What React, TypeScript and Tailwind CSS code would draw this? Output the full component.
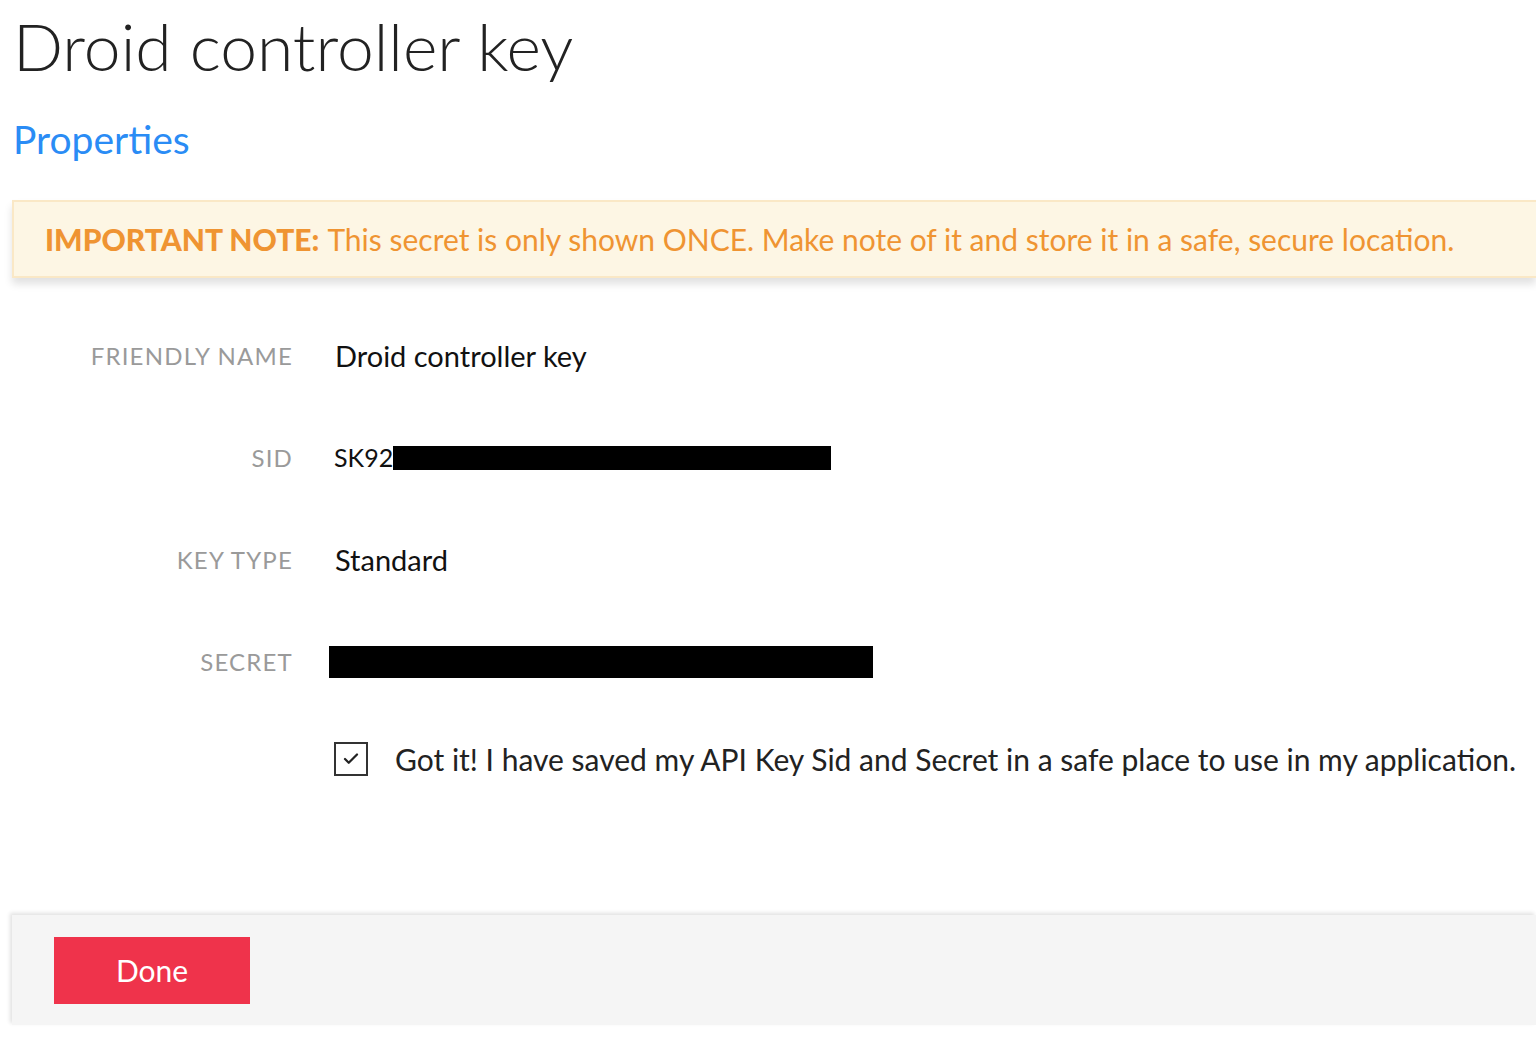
import { Check } from 'lucide-react';

const Row = ({ label, children }: { label: string; children: React.ReactNode }) => (
  <div className="flex items-center h-[102px]">
    <div className="w-[293px] text-right text-[24px] tracking-[0.05em] uppercase text-[#9a9a9a]">{label}</div>
    <div className="ml-[42px] flex items-center text-[29px] text-[#111]">{children}</div>
  </div>
);

export default function App() {
  return (
    <div className="min-h-[1038px] bg-white font-['Lato','Open_Sans',sans-serif] overflow-hidden">
      <div className="pl-[13px] pt-[4px]">
        <h1 className="text-[66px] font-light text-[#222] leading-[84px]">Droid controller key</h1>
        <h2 className="mt-[27px] text-[39px] text-[#2a8cf5] leading-[48px]">Properties</h2>
      </div>

      <div className="mt-[37px] ml-[12px] h-[78px] flex items-center bg-[#fdf6e4] border-2 border-[#fae8c6] border-r-0 shadow-[0_6px_8px_rgba(0,0,0,0.12)] pl-[31px] text-[30px] text-[#ef9432]">
        <span className="font-black">IMPORTANT NOTE:</span>
        <span className="ml-[8px]">This secret is only shown ONCE. Make note of it and store it in a safe, secure location.</span>
      </div>

      <div className="mt-[27px]">
        <Row label="Friendly Name">Droid controller key</Row>
        <Row label="SID">
          <span className="text-[25px] -ml-[1px]">SK92</span>
          <span className="inline-block w-[438px] h-[24px] bg-black" />
        </Row>
        <Row label="Key Type">Standard</Row>
        <Row label="Secret">
          <span className="-ml-[6px] inline-block w-[544px] h-[32px] bg-black" />
        </Row>
      </div>

      <div className="mt-[29px] ml-[334px] flex items-center h-[34px]">
        <div className="w-[34px] h-[34px] border-2 border-[#333] flex items-center justify-center">
          <Check className="w-[18px] h-[18px] text-[#222]" strokeWidth={3} />
        </div>
        <span className="ml-[27px] text-[30px] text-[#222] whitespace-nowrap">Got it! I have saved my API Key Sid and Secret in a safe place to use in my application.</span>
      </div>

      <div className="mt-[139px] ml-[12px] h-[110px] bg-[#f5f5f5] shadow-[-2px_-2px_4px_rgba(0,0,0,0.12)] flex items-center pl-[42px]">
        <button className="w-[196px] h-[67px] bg-[#ef334b] text-white text-[30px]">Done</button>
      </div>
    </div>
  );
}
